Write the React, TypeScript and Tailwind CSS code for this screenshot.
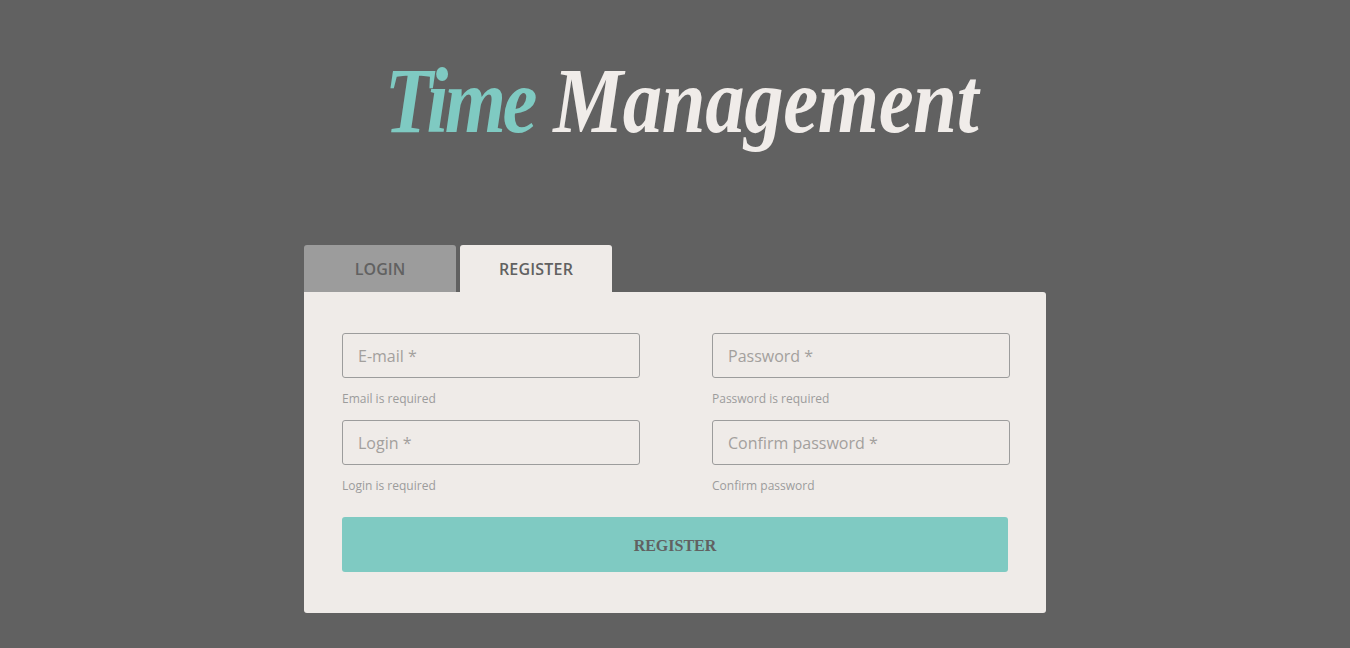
const fields = [
    { placeholder: "E-mail *", help: "Email is required" },
    { placeholder: "Password *", help: "Password is required" },
    { placeholder: "Login *", help: "Login is required" },
    { placeholder: "Confirm password *", help: "Confirm password" },
];

export default function App() {
    return (
        <div className="min-h-[648px] bg-[#616161] font-['Open_Sans',sans-serif] overflow-hidden">
            <div className="h-[245px] pt-[50px] pl-[14px] flex justify-center">
                <h1 className="scale-x-[0.837] whitespace-nowrap font-['Liberation_Serif',serif] text-[94px] leading-[100px] italic font-bold text-[#f0ece9] tracking-[-0.4px]">
                    <span className="text-[#7fcac2] tracking-[-4.2px]">Time</span> Management
                </h1>
            </div>

            <div className="w-[742px] ml-[304px]">
                <div className="flex gap-1">
                    <button className="w-[152px] h-[47px] rounded-t-[3px] bg-[#9c9c9c] text-[#616161] text-base font-semibold">LOGIN</button>
                    <button className="w-[152px] h-[47px] rounded-t-[3px] bg-[#efebe8] text-[#616161] text-base font-semibold tracking-[0.2px]">REGISTER</button>
                </div>

                <form className="h-[321px] bg-[#efebe8] rounded-b-[3px] rounded-tr-[3px] pt-[41px] pl-[38px]">
                    <div className="grid grid-cols-[298px_298px] gap-x-[72px] gap-y-[13px]">
                        {fields.map((field) => (
                            <div key={field.placeholder}>
                                <input
                                    placeholder={field.placeholder}
                                    className="block w-full h-[45px] px-[15px] bg-transparent border border-[#9c9c9c] rounded-[3px] text-base text-[#616161] placeholder:text-[#a3a09d] outline-none"
                                />
                                <p className="mt-[13px] text-[12px] leading-[16px] text-[#9c9c9c]">{field.help}</p>
                            </div>
                        ))}
                    </div>
                    <button type="button" className="block w-[666px] h-[55px] mt-[23px] pt-[2px] rounded-[3px] bg-[#7fcac2] text-[#616161] font-['Liberation_Serif',serif] text-base font-bold">
                        REGISTER
                    </button>
                </form>
            </div>
        </div>
    );
}
